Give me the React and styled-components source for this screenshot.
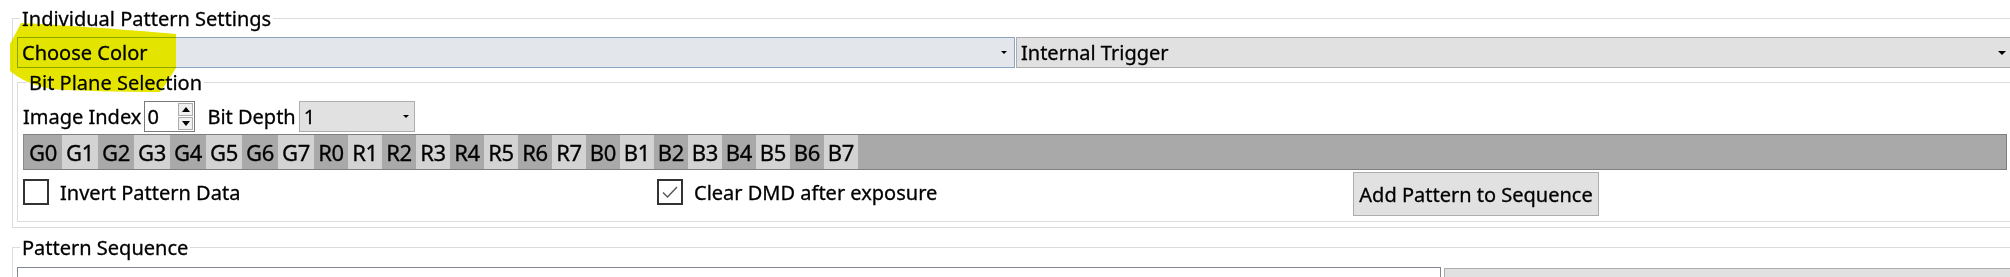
import React from 'react';
import styled, { createGlobalStyle } from 'styled-components';

const GlobalStyle = createGlobalStyle`
  html, body { margin: 0; padding: 0; background: #fff; }
  body {
    font-family: "Noto Sans", "Open Sans", sans-serif;
    font-size: 20px;
    color: #000;
    -webkit-text-stroke: 0.3px #000;
  }
`;

const Frame = styled.div`
  position: relative;
  width: 2010px;
  height: 277px;
  overflow: hidden;
  padding: 6px 0 0 12px;
  box-sizing: border-box;
`;

const Group = styled.fieldset`
  margin: ${(p) => p.$mt || 0}px 0 0 0;
  padding: ${(p) => p.$pad};
  border: 1px solid #dcdcdc;
  width: ${(p) => p.$w}px;
  box-sizing: border-box;
  min-width: 0;
`;

const Legend = styled.legend`
  padding: 0 2px;
  margin-left: ${(p) => p.$ml}px;
  line-height: 25px;
  font-size: 20px;
`;

const Row = styled.div`
  display: flex;
  align-items: ${(p) => p.$align || 'center'};
  height: ${(p) => p.$h}px;
  margin-top: ${(p) => p.$mt || 0}px;
  gap: ${(p) => p.$gap || 0}px;
`;

const Combo = styled.div`
  position: relative;
  display: flex;
  align-items: center;
  width: ${(p) => p.$w}px;
  height: 31px;
  box-sizing: border-box;
  padding-left: 4px;
  margin-left: ${(p) => p.$ml || 0}px;
  background: ${(p) => (p.$focus ? '#e3e6ea' : '#e1e1e1')};
  border: 1px solid ${(p) => (p.$focus ? '#8ba5c1' : '#adadad')};
  flex: none;
`;

const Arrow = styled.span`
  position: absolute;
  right: ${(p) => p.$r}px;
  top: 13px;
  width: 0;
  height: 0;
  border-left: ${(p) => p.$s}px solid transparent;
  border-right: ${(p) => p.$s}px solid transparent;
  border-top: ${(p) => p.$s}px solid #000;
`;

const Label = styled.span`
  white-space: nowrap;
  margin-left: ${(p) => p.$ml || 0}px;
`;

const Spin = styled.div`
  display: flex;
  width: 51px;
  height: 31px;
  box-sizing: border-box;
  border: 1px solid #7a7a7a;
  background: #fff;
  margin-left: 3px;
  flex: none;
`;

const SpinText = styled.span`
  flex: 1;
  padding-left: 2px;
  line-height: 29px;
`;

const SpinButtons = styled.div`
  display: flex;
  flex-direction: column;
  width: 15px;
  padding: 1px 1px 1px 0;
  gap: 1px;
`;

const SpinButton = styled.div`
  flex: 1;
  display: flex;
  align-items: center;
  justify-content: center;
  background: #f0f0f0;
  border: 1px solid #acacac;
  &::after {
    content: '';
    border-left: 4px solid transparent;
    border-right: 4px solid transparent;
    ${(p) => (p.$up ? 'border-bottom: 5px solid #000;' : 'border-top: 5px solid #000;')}
  }
`;

const Bar = styled.div`
  display: flex;
  width: 1984px;
  height: 36px;
  box-sizing: border-box;
  margin-top: 2px;
  background: #a9a9a9;
  border: 1px solid #7f7f7f;
  border-left-color: #8a8a8a;
`;

const Cell = styled.span`
  display: flex;
  align-items: center;
  justify-content: center;
  width: ${(p) => p.$w}px;
  height: 100%;
  font-size: 22px;
  letter-spacing: -0.3px;
  background: ${(p) => (p.$light ? '#d3d3d3' : 'transparent')};
`;

const CheckItem = styled.div`
  display: flex;
  align-items: center;
  width: ${(p) => p.$w}px;
  gap: 11px;
  flex: none;
  margin-top: -4px;
`;

const Box = styled.span`
  display: flex;
  align-items: center;
  justify-content: center;
  width: 26px;
  height: 26px;
  box-sizing: border-box;
  border: 2px solid #333;
  background: #fff;
  flex: none;
`;

const Button = styled.button`
  width: 246px;
  height: 44px;
  font: inherit;
  font-size: 20px;
  color: #000;
  background: #e1e1e1;
  border: 1px solid #adadad;
  padding: 0;
  flex: none;
`;

const List = styled.div`
  width: 1424px;
  height: 40px;
  box-sizing: border-box;
  border: 1px solid #828790;
  background: #fff;
  flex: none;
`;

const GrayPanel = styled.div`
  width: 700px;
  height: 40px;
  margin-top: 1px;
  box-sizing: border-box;
  border: 1px solid #adadad;
  background: #e1e1e1;
  flex: none;
`;

const Highlight = styled.svg`
  position: absolute;
  left: 0;
  top: 0;
  pointer-events: none;
  mix-blend-mode: darken;
`;

const planes = [
  ...Array.from({ length: 8 }, (_, i) => ({ t: `G${i}`, w: i === 0 ? 38 : 36 })),
  ...Array.from({ length: 8 }, (_, i) => ({ t: `R${i}`, w: 34 })),
  ...Array.from({ length: 8 }, (_, i) => ({ t: `B${i}`, w: 34 })),
];

export default function App() {
  return (
    <>
      <GlobalStyle />
      <Frame>
        <Group $w={2040} $pad="6px 0 5px 4px">
          <Legend $ml={3}>Individual Pattern Settings</Legend>
          <Row $h={31} $gap={1}>
            <Combo $w={998} $focus>
              Choose Color
              <Arrow $r={7} $s={3} />
            </Combo>
            <Combo $w={995}>
              Internal Trigger
              <Arrow $r={4} $s={4} />
            </Combo>
          </Row>
          <Group $w={2030} $mt={2} $pad="6px 0 5px 5px">
            <Legend $ml={4}>Bit Plane Selection</Legend>
            <Row $h={31}>
              <Label>Image Index</Label>
              <Spin>
                <SpinText>0</SpinText>
                <SpinButtons>
                  <SpinButton $up />
                  <SpinButton />
                </SpinButtons>
              </Spin>
              <Label $ml={12}>Bit Depth</Label>
              <Combo $w={116} $ml={3}>
                1
                <Arrow $r={5} $s={3} />
              </Combo>
            </Row>
            <Bar>
              {planes.map((p, i) => (
                <Cell key={p.t} $w={p.w} $light={i % 2 === 1}>
                  {p.t}
                </Cell>
              ))}
            </Bar>
            <Row $h={44} $mt={2}>
              <CheckItem $w={634}>
                <Box />
                <Label>Invert Pattern Data</Label>
              </CheckItem>
              <CheckItem $w={696}>
                <Box>
                  <svg width="18" height="14" viewBox="0 0 18 14">
                    <path d="M2 7.5 L6.5 12 L16 2" fill="none" stroke="#555" strokeWidth="1.4" />
                  </svg>
                </Box>
                <Label>Clear DMD after exposure</Label>
              </CheckItem>
              <Button>Add Pattern to Sequence</Button>
            </Row>
          </Group>
        </Group>
        <Group $w={2040} $mt={7} $pad="7px 0 0 4px">
          <Legend $ml={3}>Pattern Sequence</Legend>
          <Row $h={41} $gap={3} $align="flex-start">
            <List />
            <GrayPanel />
          </Row>
        </Group>
        <Highlight width="200" height="100" viewBox="0 0 200 100">
          <path
            d="M21 23 C60 25 120 29 176 34 L176 68 C171 76 166 84 160 92 C120 92 80 91 50 89 C32 85 18 78 10 71 L10 44 L21 23 Z"
            fill="#e5e500"
          />
        </Highlight>
      </Frame>
    </>
  );
}
